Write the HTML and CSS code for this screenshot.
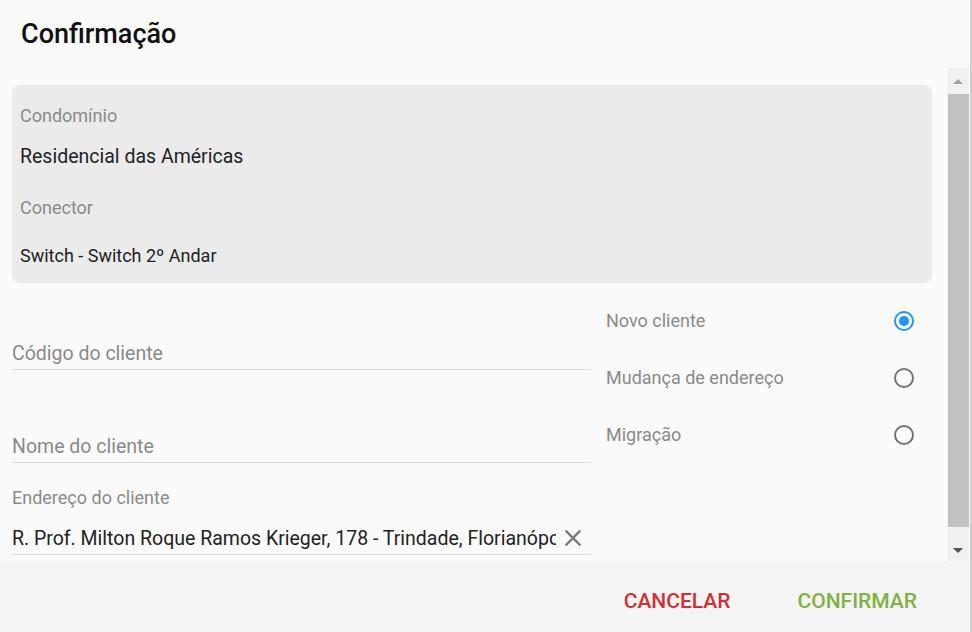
FILE: index.html
```html
<!DOCTYPE html>
<html lang="pt-BR">
<head>
    <meta charset="UTF-8">
    <title>Confirmação</title>
    <link rel="stylesheet" href="styles.css">
</head>
<body>

    <div class="dialog">
        <div class="dialog-title">Confirmação</div>

        <div class="dialog-body">
            <div class="content">
                <!-- Dados do condominio -->
                <div class="info-box">
                    <div class="info-label">Condomínio</div>
                    <div class="info-value big">Residencial das Américas</div>
                    <div class="info-label second">Conector</div>
                    <div class="info-value">Switch - Switch 2º Andar</div>
                </div>

                <div class="form-row">
                    <div class="fields">
                        <div class="field first">
                            <div class="input placeholder">Código do cliente</div>
                        </div>
                        <div class="field second">
                            <div class="input placeholder">Nome do cliente</div>
                        </div>
                        <div class="field third">
                            <div class="field-label">Endereço do cliente</div>
                            <div class="input">
                                <span class="input-text">R. Prof. Milton Roque Ramos Krieger, 178 - Trindade, Florianópolis - SC</span>
                                <svg class="clear-icon" width="28" height="28" viewBox="0 0 24 24">
                                    <path d="M19 6.41L17.59 5 12 10.59 6.41 5 5 6.41 10.59 12 5 17.59 6.41 19 12 13.41 17.59 19 19 17.59 13.41 12z" fill="#7a7a7a"/>
                                </svg>
                            </div>
                        </div>
                    </div>

                    <div class="options">
                        <label class="option">
                            <span>Novo cliente</span>
                            <span class="radio checked"></span>
                        </label>
                        <label class="option">
                            <span>Mudança de endereço</span>
                            <span class="radio"></span>
                        </label>
                        <label class="option">
                            <span>Migração</span>
                            <span class="radio"></span>
                        </label>
                    </div>
                </div>
            </div>

            <!-- scrollbar -->
            <div class="scrollbar">
                <div class="scroll-btn"><span class="arrow up"></span></div>
                <div class="scroll-track"><div class="scroll-thumb"></div></div>
                <div class="scroll-btn"><span class="arrow down"></span></div>
            </div>
        </div>

        <div class="dialog-actions">
            <button class="btn cancel">CANCELAR</button>
            <button class="btn confirm">CONFIRMAR</button>
        </div>
    </div>

</body>
</html>
```

FILE: styles.css
```css
body {
    margin: 0;
    font-family: 'Roboto', 'Liberation Sans', sans-serif;
    background: #fafafa;
    color: #212121;
    overflow: hidden;
}

.dialog {
    width: 970px;
    height: 632px;
    display: flex;
    flex-direction: column;
    border-right: 2px solid #d0d0d0;
}

.dialog-title {
    height: 68px;
    display: flex;
    align-items: center;
    padding-left: 21px;
    font-size: 27px;
    font-weight: 500;
    color: #111;
}

.dialog-body {
    flex: 1;
    display: flex;
    min-height: 0;
}

.content {
    flex: 1;
    padding: 17px 15px 0 12px;
}

/* Info box */
.info-box {
    background: #ebebeb;
    border-radius: 8px;
    height: 198px;
    box-sizing: border-box;
    padding: 20px 8px 0 8px;
}

.info-label {
    font-size: 18px;
    line-height: 22px;
    color: #8a8a8a;
}

.info-label.second {
    margin-top: 28px;
}

.info-value {
    font-size: 18px;
    line-height: 22px;
    color: #222;
    margin-top: 26px;
}

.info-value.big {
    font-size: 19.5px;
    line-height: 24px;
    margin-top: 18px;
}

/* Form */
.form-row {
    display: flex;
    gap: 15px;
}

.fields {
    width: 579px;
}

.field.first { margin-top: 54px; }
.field.second { margin-top: 60px; }
.field.third { margin-top: 24px; }

.field-label {
    font-size: 18px;
    line-height: 22px;
    color: #8a8a8a;
    margin-bottom: 13px;
}

.input {
    height: 32px;
    display: flex;
    align-items: center;
    border-bottom: 1px solid #dcdcdc;
    font-size: 19.5px;
    color: #222;
}

.input.placeholder {
    color: #8a8a8a;
}

.input-text {
    flex: 1;
    white-space: nowrap;
    overflow: hidden;
}

.clear-icon {
    margin: 0 4px 0 3px;
    flex-shrink: 0;
}

.options {
    flex: 1;
    padding: 9px 17px 0 0;
}

.option {
    height: 57px;
    display: flex;
    align-items: center;
    justify-content: space-between;
    font-size: 18px;
    color: #8a8a8a;
}

.radio {
    width: 16px;
    height: 16px;
    border: 2px solid #737373;
    border-radius: 50%;
    margin-right: 1px;
    position: relative;
}

.radio.checked {
    border-color: #2196f3;
}

.radio.checked::after {
    content: '';
    position: absolute;
    left: 3px;
    top: 3px;
    width: 10px;
    height: 10px;
    border-radius: 50%;
    background: #2196f3;
}

/* Scrollbar */
.scrollbar {
    width: 22px;
    margin-right: 1px;
    background: #f1f1f1;
    display: flex;
    flex-direction: column;
}

.scroll-btn {
    height: 26px;
    display: flex;
    align-items: center;
    justify-content: center;
}

.scroll-btn:last-child {
    height: 21px;
}

.scroll-track {
    flex: 1;
    padding-bottom: 13px;
    display: flex;
}

.scroll-thumb {
    flex: 1;
    margin-left: 1px;
    background: #c1c1c1;
}

.arrow {
    width: 0;
    height: 0;
    border-left: 5px solid transparent;
    border-right: 5px solid transparent;
}

.arrow.up {
    border-bottom: 5px solid #a3a3a3;
}

.arrow.down {
    border-top: 5px solid #505050;
}

/* Actions */
.dialog-actions {
    height: 71px;
    box-sizing: border-box;
    padding: 9px 53px 0 0;
    background: #f4f4f4;
    display: flex;
    justify-content: flex-end;
    align-items: center;
}

.btn {
    background: none;
    border: none;
    font-family: inherit;
    font-size: 21px;
    font-weight: 500;
    padding: 0;
    cursor: pointer;
}

.btn.cancel {
    color: #d32f2f;
    margin-right: 67px;
}

.btn.confirm {
    color: #7cb342;
}
```
